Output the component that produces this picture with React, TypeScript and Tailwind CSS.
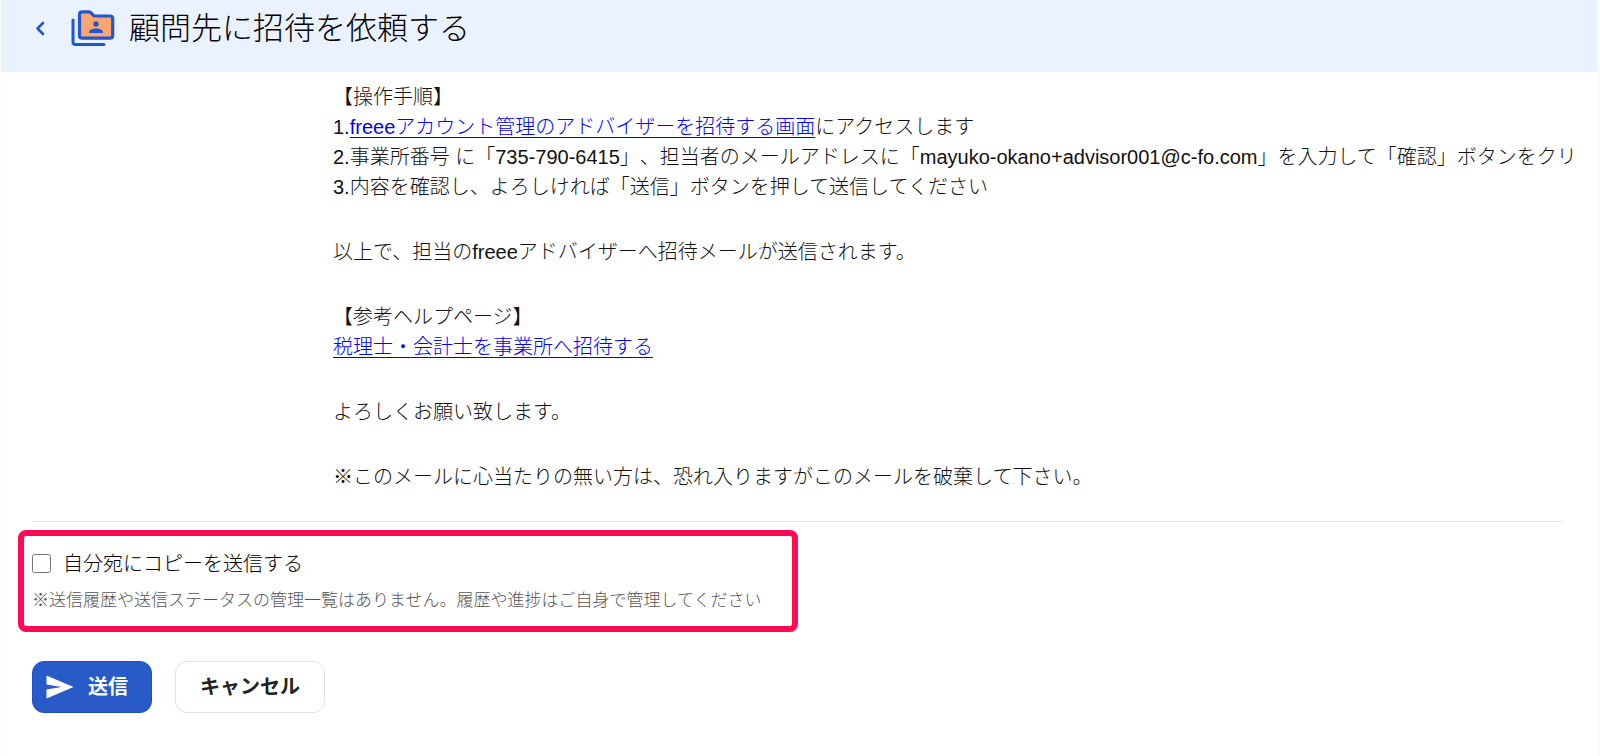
import { useState } from 'react'

function FolderIcon() {
  return (
    <svg viewBox="0 0 44 38" className="w-11 h-[38px]" fill="none" aria-hidden="true">
      <path
        d="M2 11v22c0 1.700.8 2.500 2.500 2.500H33"
        stroke="#1f57cc"
        strokeWidth="3"
        strokeLinecap="round"
      />
      <path
        d="M8.500 5.500c0-1.700 1-2.700 2.700-2.700h6.500c.9 0 1.500.3 2.100.9L23 7h16c1.700 0 2.700 1 2.700 2.700V26.500c0 1.700-1 2.700-2.700 2.700H11.200c-1.700 0-2.700-1-2.700-2.700z"
        fill="#ffa572"
        stroke="#1f57cc"
        strokeWidth="3.200"
        strokeLinejoin="round"
      />
      <circle cx="25" cy="15" r="2.700" fill="#1f57cc" />
      <path d="M18 24v-1c0-2.300 4-3.500 7-3.500s7 1.200 7 3.500v1z" fill="#1f57cc" />
    </svg>
  )
}

function BackIcon() {
  return (
    <svg viewBox="0 0 12 16" className="w-3 h-4" fill="none" aria-hidden="true">
      <path d="M8 3L2.500 8.500 8 14" stroke="#1f57cc" strokeWidth="2.600" strokeLinecap="round" strokeLinejoin="round" />
    </svg>
  )
}

function SendIcon() {
  return (
    <svg viewBox="0 0 28 24" className="w-7 h-6" fill="currentColor" aria-hidden="true">
      <path d="M0.500 0.500L27.500 12 0.500 23.500V14.500L15.500 12 0.500 9.500z" />
    </svg>
  )
}

function PageHeader() {
  return (
    <header className="flex items-start h-[72px] pl-[34px] pt-2 bg-[#eaf2ff]">
      <button type="button" aria-label="戻る" className="flex items-center h-10">
        <BackIcon />
      </button>
      <div className="flex items-center h-10 ml-6">
        <FolderIcon />
      </div>
      <h1 className="ml-3.5 text-[31px] leading-[42px] font-light text-black whitespace-nowrap">
        顧問先に招待を依頼する
      </h1>
    </header>
  )
}

function MailBody() {
  return (
    <section className="flex flex-col gap-[35px] pl-[301px] pt-2.5 pb-[29px] text-xl leading-[30px] font-light text-[#111111] whitespace-nowrap overflow-hidden">
      <div>
        <p>【操作手順】</p>
        <p>
          1.
          <a href="#invite" className="text-[#0000ee] underline decoration-1 underline-offset-3">
            freeeアカウント管理のアドバイザーを招待する画面
          </a>
          にアクセスします
        </p>
        <p>
          2.事業所番号 に「735-790-6415」、担当者のメールアドレスに「mayuko-okano+advisor001@c-fo.com」を入力して「確認」ボタンをクリ
        </p>
        <p>3.内容を確認し、よろしければ「送信」ボタンを押して送信してください</p>
      </div>
      <p>以上で、担当のfreeeアドバイザーへ招待メールが送信されます。</p>
      <div>
        <p>【参考ヘルプページ】</p>
        <p>
          <a href="#help" className="text-[#0000ee] underline decoration-1 underline-offset-3">
            税理士・会計士を事業所へ招待する
          </a>
        </p>
      </div>
      <p>よろしくお願い致します。</p>
      <p>※このメールに心当たりの無い方は、恐れ入りますがこのメールを破棄して下さい。</p>
    </section>
  )
}

export default function App() {
  const [sendCopy, setSendCopy] = useState(false)

  return (
    <div className="min-h-screen bg-[#fafafa] pl-px pr-[3px] font-['Liberation_Sans','Noto_Sans_CJK_JP',sans-serif] [text-spacing-trim:space-all]">
      <div className="min-h-screen bg-white">
        <PageHeader />
        <main className="pl-[31px]">
          <MailBody />
          <hr className="mr-[35px] border-[#e4e4e4]" />

          <form onSubmit={(e) => e.preventDefault()}>
            <div className="w-[780px] max-w-full -ml-3.5 mt-2 px-2 pt-3 pb-2.5 border-6 border-[#ff0a54] rounded-lg">
              <label className="flex items-center gap-3 h-8 text-xl font-light text-black">
                <input
                  type="checkbox"
                  checked={sendCopy}
                  onChange={(e) => setSendCopy(e.target.checked)}
                  className="w-[19px] h-[19px] mb-0.5"
                />
                自分宛にコピーを送信する
              </label>
              <p className="mt-1.5 text-[17px] leading-[30px] font-light text-[#555555] whitespace-nowrap">
                ※送信履歴や送信ステータスの管理一覧はありません。履歴や進捗はご自身で管理してください
              </p>
            </div>

            <div className="flex gap-[23px] mt-[29px]">
              <button
                type="submit"
                className="flex items-center gap-3.5 h-[52px] w-[120px] pl-[13px] rounded-xl border border-[#1a50cc] bg-[#285ac8] text-xl font-bold text-white whitespace-nowrap"
              >
                <SendIcon />
                送信
              </button>
              <button
                type="button"
                className="h-[52px] w-[150px] rounded-xl border border-[#e1e1e1] bg-white text-xl font-bold text-[#222222]"
              >
                キャンセル
              </button>
            </div>
          </form>
        </main>
      </div>
    </div>
  )
}
